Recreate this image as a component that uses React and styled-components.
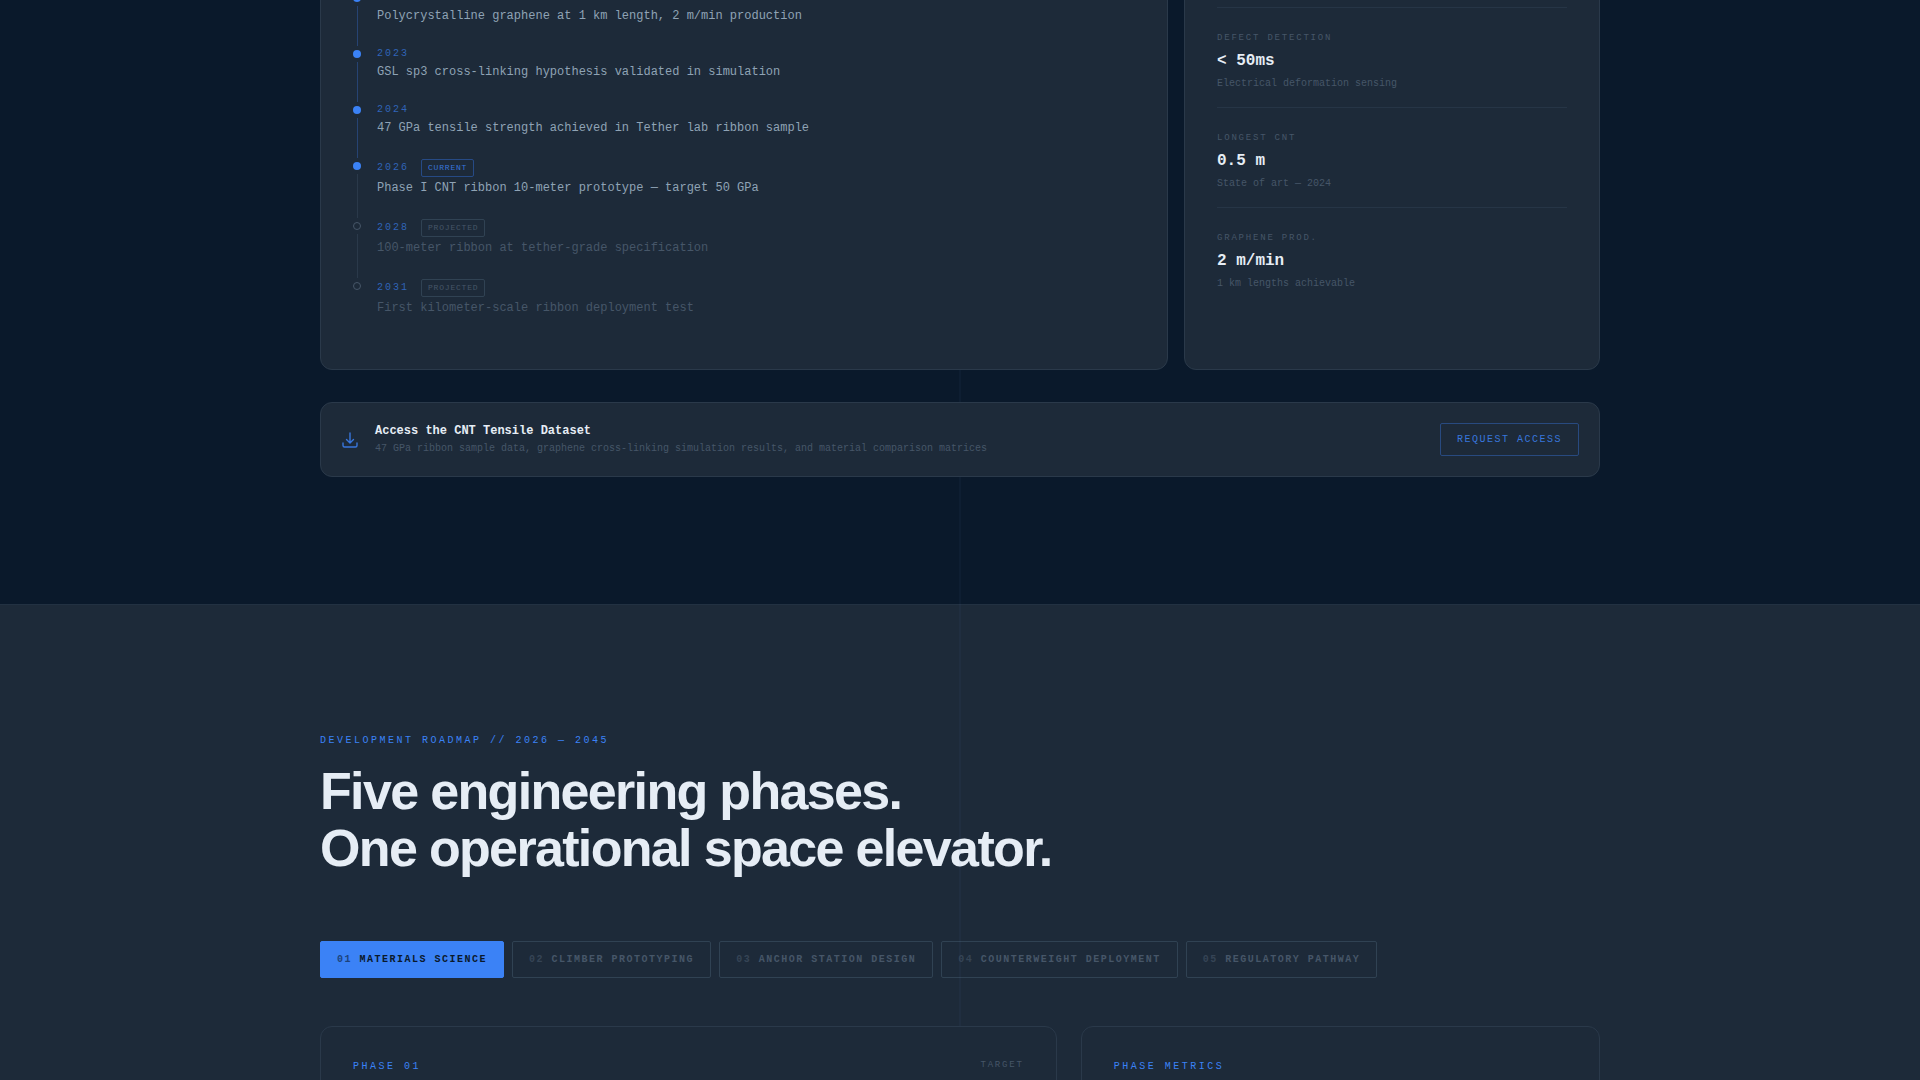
import React, { useState } from "react";
import styled, { createGlobalStyle, css } from "styled-components";

const color = {
  navy: "#0a192b",
  slate: "#1d2a39",
  line: "#2a394a",
  outline: "#304253",
  accent: "#3b82f6",
  accentSoft: "#3876dc",
  accentDim: "#3064b8",
  bright: "#e6edf5",
  text: "#8fa3b5",
  muted: "#465668",
};

const GlobalStyle = createGlobalStyle`
  *, *::before, *::after { box-sizing: border-box; }
  html, body { margin: 0; background: ${color.slate}; }
  html { overflow: hidden; }
  body {
    color: ${color.text};
    font-family: "Liberation Mono", "DejaVu Sans Mono", monospace;
  }
  h2, h3, p, ol, dl, dd { margin: 0; padding: 0; }
`;

const Page = styled.main`
  position: relative;
  height: 100vh;
  overflow: hidden;
`;

const Tether = styled.div`
  position: absolute;
  top: 0;
  bottom: 0;
  left: 50%;
  width: 2px;
  margin-left: -1px;
  background: rgba(90, 140, 190, 0.05);
  pointer-events: none;
`;

const Band = styled.section`
  background: ${(p) => (p.$raised ? color.slate : color.navy)};
  border-top: ${(p) => (p.$raised ? "1px solid #223142" : "0")};
  padding: ${(p) => (p.$raised ? "128px 0" : "0 0 127px")};
`;

const Container = styled.div`
  width: calc(100% - 48px);
  max-width: 1280px;
  margin: 0 auto;
`;

const Card = styled.div`
  position: relative;
  background: ${color.slate};
  border: 1px solid ${color.line};
  border-radius: 12px;
`;

const MaterialGrid = styled.div`
  display: grid;
  grid-template-columns: repeat(3, minmax(0, 1fr));
  gap: 16px;
  margin-top: -43px;
`;

const TimelineCard = styled(Card)`
  grid-column: span 2;
  padding: 32px 32px 31px;
`;

const Timeline = styled.ol`
  list-style: none;
`;

const Milestone = styled.li`
  display: flex;
  gap: 16px;
`;

const Rail = styled.div`
  display: flex;
  flex-direction: column;
  align-items: center;
  gap: 4px;
  width: 8px;
  padding-top: 4px;
`;

const Dot = styled.span`
  width: 8px;
  height: 8px;
  flex: none;
  border-radius: 50%;
  ${(p) =>
    p.$hollow
      ? css`border: 1px solid ${color.muted};`
      : css`background: ${color.accent};`}
`;

const RailLine = styled.span`
  flex: 1;
  width: 1px;
  background: ${(p) => (p.$lit ? "#264373" : color.line)};
`;

const MilestoneBody = styled.div`
  padding-bottom: 20px;
`;

const YearRow = styled.div`
  display: flex;
  align-items: center;
  gap: 12px;
  min-height: ${(p) => (p.$tagged ? 20 : 16)}px;
`;

const Year = styled.time`
  color: ${color.accentDim};
  font-size: 10px;
  line-height: 16px;
  letter-spacing: 2px;
`;

const Badge = styled.span`
  padding: 2px 6px;
  border: 1px solid ${(p) => (p.$active ? "#264a85" : color.outline)};
  border-radius: 2px;
  color: ${(p) => (p.$active ? color.accentSoft : color.muted)};
  font-size: 8px;
  line-height: 12px;
  letter-spacing: 0.1em;
`;

const MilestoneText = styled.p`
  color: ${(p) => (p.$dim ? color.muted : color.text)};
  font-size: 12px;
  line-height: 20px;
`;

const MetricCard = styled(Card)`
  padding: 49px 32px 31px;
`;

const Metric = styled.div`
  display: flex;
  flex-direction: column;
  gap: 4px;
  padding: 23px 0 16px;
  border-top: 1px solid #263546;
`;

const MetricLabel = styled.dt`
  color: ${color.muted};
  font-size: 9px;
  line-height: 14px;
  letter-spacing: 0.2em;
`;

const MetricValue = styled.dd`
  color: ${color.bright};
  font-size: 16px;
  font-weight: 700;
  line-height: 24px;
`;

const MetricNote = styled.dd`
  color: ${color.muted};
  font-size: 10px;
  line-height: 14px;
`;

const AccessBar = styled(Card)`
  display: flex;
  align-items: center;
  gap: 16px;
  margin-top: 32px;
  padding: 20px;
`;

const AccessCopy = styled.div`
  flex: 1;
`;

const AccessTitle = styled.h3`
  color: ${color.bright};
  font-size: 12px;
  font-weight: 700;
  line-height: 16px;
`;

const AccessNote = styled.p`
  && { margin-top: 2px; }
  color: ${color.muted};
  font-size: 10px;
  line-height: 15px;
`;

const RequestButton = styled.button`
  padding: 10px 16px;
  border: 1px solid #284a80;
  border-radius: 2px;
  background: transparent;
  color: ${color.accentSoft};
  font: inherit;
  font-size: 10px;
  line-height: 11px;
  letter-spacing: 0.15em;
  cursor: pointer;
`;

const Eyebrow = styled.p`
  color: ${color.accent};
  font-size: 10px;
  line-height: 16px;
  letter-spacing: 0.25em;
`;

const Headline = styled.h2`
  && { margin-top: 14px; }
  color: ${color.bright};
  font-family: "Liberation Sans", Arial, sans-serif;
  font-size: 52px;
  font-weight: 700;
  line-height: 57px;
  letter-spacing: -0.032em;
`;

const Tabs = styled.div`
  display: flex;
  flex-wrap: wrap;
  gap: 8px;
  margin-top: 64px;
`;

const Tab = styled.button`
  padding: 12px 16px;
  border: 1px solid ${(p) => (p.$active ? color.accent : color.outline)};
  border-radius: 2px;
  background: ${(p) => (p.$active ? color.accent : "transparent")};
  color: ${(p) => (p.$active ? color.navy : color.muted)};
  font: inherit;
  font-size: 10px;
  font-weight: 700;
  line-height: 11px;
  letter-spacing: 0.15em;
  cursor: pointer;
`;

const TabNumber = styled.span`
  opacity: 0.6;
`;

const PhaseGrid = styled.div`
  display: grid;
  grid-template-columns: repeat(12, minmax(0, 1fr));
  gap: 24px;
  margin-top: 48px;
`;

const PhaseCard = styled(Card)`
  grid-column: span ${(p) => p.$span};
  display: flex;
  justify-content: space-between;
  align-items: flex-start;
  min-height: 320px;
  padding: 32px;
`;

const TargetLabel = styled.span`
  color: ${color.muted};
  font-size: 9px;
  line-height: 12px;
  letter-spacing: 0.2em;
`;

const milestones = [
  { text: "Polycrystalline graphene at 1 km length, 2 m/min production", lit: true },
  { year: "2023", text: "GSL sp3 cross-linking hypothesis validated in simulation", lit: true },
  { year: "2024", text: "47 GPa tensile strength achieved in Tether lab ribbon sample", lit: true },
  { year: "2026", text: "Phase I CNT ribbon 10-meter prototype — target 50 GPa", badge: "CURRENT" },
  { year: "2028", text: "100-meter ribbon at tether-grade specification", badge: "PROJECTED" },
  { year: "2031", text: "First kilometer-scale ribbon deployment test", badge: "PROJECTED" },
];

const metrics = [
  { label: "DEFECT DETECTION", value: "< 50ms", note: "Electrical deformation sensing" },
  { label: "LONGEST CNT", value: "0.5 m", note: "State of art — 2024" },
  { label: "GRAPHENE PROD.", value: "2 m/min", note: "1 km lengths achievable" },
];

const phases = [
  "MATERIALS SCIENCE",
  "CLIMBER PROTOTYPING",
  "ANCHOR STATION DESIGN",
  "COUNTERWEIGHT DEPLOYMENT",
  "REGULATORY PATHWAY",
];

function DownloadIcon() {
  return (
    <svg width="18" height="18" viewBox="0 0 18 18" fill="none" stroke={color.accentSoft}
      strokeWidth="1.4" strokeLinecap="round" strokeLinejoin="round" aria-hidden="true">
      <path d="M9 2v9.500M5.500 8.500L9 12l3.500-3.500" />
      <path d="M2 12v2.500a1.500 1.500 0 0 0 1.500 1.500h11a1.500 1.500 0 0 0 1.500-1.500V12" />
    </svg>
  );
}

export default function App() {
  const [active, setActive] = useState(0);

  return (
    <>
      <GlobalStyle />
      <Page>
        <Tether />
        <Band>
          <Container>
            <MaterialGrid>
              <TimelineCard>
                <Timeline>
                  {milestones.map((m, i) => {
                    const projected = m.badge === "PROJECTED";
                    return (
                      <Milestone key={m.text}>
                        <Rail>
                          <Dot $hollow={projected} />
                          {i < milestones.length - 1 && <RailLine $lit={m.lit} />}
                        </Rail>
                        <MilestoneBody>
                          <YearRow $tagged={Boolean(m.badge)}>
                            {m.year && <Year>{m.year}</Year>}
                            {m.badge && <Badge $active={!projected}>{m.badge}</Badge>}
                          </YearRow>
                          <MilestoneText $dim={projected}>{m.text}</MilestoneText>
                        </MilestoneBody>
                      </Milestone>
                    );
                  })}
                </Timeline>
              </TimelineCard>
              <MetricCard as="dl">
                {metrics.map((m) => (
                  <Metric key={m.label}>
                    <MetricLabel>{m.label}</MetricLabel>
                    <MetricValue>{m.value}</MetricValue>
                    <MetricNote>{m.note}</MetricNote>
                  </Metric>
                ))}
              </MetricCard>
            </MaterialGrid>
            <AccessBar>
              <DownloadIcon />
              <AccessCopy>
                <AccessTitle>Access the CNT Tensile Dataset</AccessTitle>
                <AccessNote>
                  47 GPa ribbon sample data, graphene cross-linking simulation results, and material
                  comparison matrices
                </AccessNote>
              </AccessCopy>
              <RequestButton type="button">REQUEST ACCESS</RequestButton>
            </AccessBar>
          </Container>
        </Band>

        <Band $raised>
          <Container>
            <Eyebrow>DEVELOPMENT ROADMAP // 2026 — 2045</Eyebrow>
            <Headline>
              Five engineering phases.
              <br />
              One operational space elevator.
            </Headline>
            <Tabs>
              {phases.map((name, i) => (
                <Tab key={name} type="button" $active={i === active} onClick={() => setActive(i)}>
                  <TabNumber>{`0${i + 1}`}</TabNumber> {name}
                </Tab>
              ))}
            </Tabs>
            <PhaseGrid>
              <PhaseCard $span={7}>
                <Eyebrow>{`PHASE 0${active + 1}`}</Eyebrow>
                <TargetLabel>TARGET</TargetLabel>
              </PhaseCard>
              <PhaseCard $span={5}>
                <Eyebrow>PHASE METRICS</Eyebrow>
              </PhaseCard>
            </PhaseGrid>
          </Container>
        </Band>
      </Page>
    </>
  );
}
